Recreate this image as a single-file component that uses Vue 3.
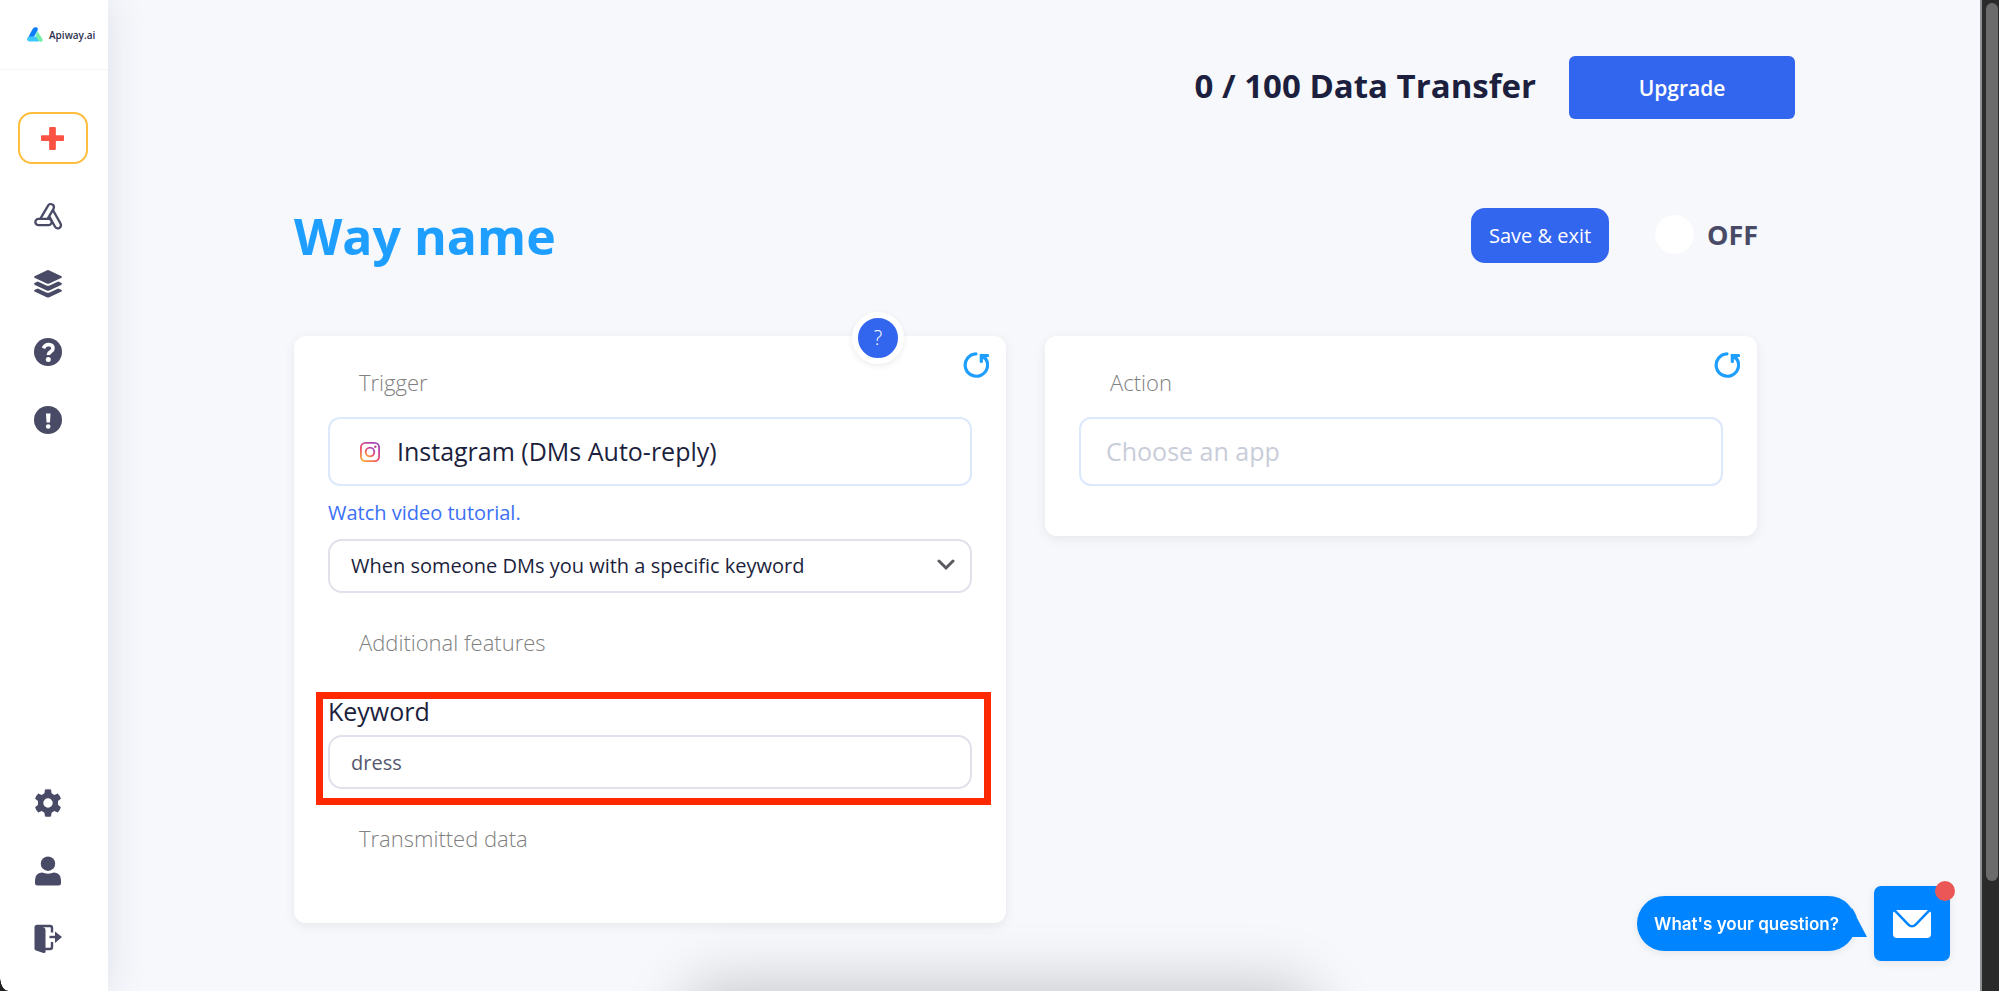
<template>
  <div class="app">
    <aside class="sidebar">
      <a class="logo" href="#" aria-label="Apiway.ai">
        <svg class="logo__mark" viewBox="0 0 32 30" aria-hidden="true">
          <path d="M1 21 C-1 25 1 29 5 29 H25 L20 19 H4 Z" fill="#3cc8fb" />
          <path d="M9 8 L12 3 Q15 -1 20 1 Q23 3 21 7 L15 18 Q14 19.500 12 19.500 H3 Z" fill="#0b7ffb" />
          <path d="M20.500 8 L31 24 Q33 29 28 30 Q24 30 21 24 L17 17 Z" fill="#76efab" />
        </svg>
        <span class="logo__text">Apiway.ai</span>
      </a>

      <button class="add" type="button" aria-label="Add way">
        <svg viewBox="0 0 24 24"><path d="M9.500 0h5q1 0 1 1v7.500H23q1 0 1 1v4q0 1-1 1h-7.500V23q0 1-1 1h-5q-1 0-1-1v-8.500H1q-1 0-1-1v-4q0-1 1-1h7.500V1q0-1 1-1z" /></svg>
      </button>

      <nav class="nav">
        <a href="#" aria-label="Ways">
          <!-- three overlapping capsules, each a thick stroke with a white core -->
          <svg viewBox="0 0 28 28" class="capsules">
            <path class="capsule" d="M17 11 L23.800 23.200" />
            <path class="core" d="M17 11 L23.800 23.200" />
            <path class="capsule" d="M9 18.500 L16.800 5.200" />
            <path class="core" d="M9 18.500 L16.800 5.200" />
            <path class="capsule" d="M4.500 20 H14.500" />
            <path class="core" d="M4.500 20 H14.500" />
          </svg>
        </a>
        <a href="#" aria-label="Templates">
          <svg viewBox="0 0 28 28">
            <path d="M12.700.4q1.300-.6 2.600 0L27 5.900q2 1 0 2L15.300 13.400q-1.300.6-2.600 0L1 7.900q-2-1 0-2z" />
            <path d="M1 12.800q-2 1 0 2.100l11.700 5.500q1.300.6 2.600 0L27 14.900q2-1.100 0-2.100l-2.800-1.300-8 3.800q-2.200 1-4.400 0l-8-3.800z" />
            <path d="M1 19.700q-2 1 0 2.100l11.700 5.500q1.300.6 2.600 0L27 21.800q2-1.100 0-2.100l-2.800-1.300-8 3.800q-2.200 1-4.400 0l-8-3.800z" />
          </svg>
        </a>
        <a href="#" aria-label="Help">
          <svg viewBox="0 0 28 28">
            <circle cx="14" cy="14" r="14" />
            <path class="cut-line" d="M9.400 10.200 Q11 6.500 14.600 6.500 Q19 6.700 19 10.200 Q19 12.300 16.800 13.600 Q14.400 15 14.300 17" />
            <circle class="cut" cx="14.300" cy="21.500" r="2.500" />
          </svg>
        </a>
        <a href="#" aria-label="News">
          <svg viewBox="0 0 28 28">
            <circle cx="14" cy="14" r="14" />
            <path class="cut" d="M12 7.500h4.500l-.5 9h-3.500z" />
            <circle class="cut" cx="14.200" cy="20.500" r="2.300" />
          </svg>
        </a>
      </nav>

      <nav class="nav nav--bottom">
        <a href="#" aria-label="Settings">
          <svg viewBox="0 0 28 28">
            <path fill-rule="evenodd" d="M11 .6q3-.9 6 0l.6 3.700 2.700 1.600 3.500-1.400q2.200 2.200 3.100 5.200L24 12.100v3.600l2.900 2.500q-1 3.100-3.100 5.300l-3.500-1.400-2.700 1.600-.6 3.700q-3 .9-6 0l-.6-3.700-2.700-1.600-3.500 1.400Q2 21.300 1.100 18.200L4 15.700v-3.600L1.100 9.700Q2 6.700 4.200 4.500l3.500 1.400 2.700-1.600zM14 9.300a4.700 4.700 0 1 0 0 9.400 4.700 4.700 0 0 0 0-9.400z" />
          </svg>
        </a>
        <a href="#" aria-label="Profile">
          <svg viewBox="0 0 28 28">
            <circle cx="14" cy="6.700" r="7.200" />
            <path d="M8 15.500q1 0 2 .5 4 1.300 8 0 1-.5 2-.5 7 .6 7 8v2.500q0 2.500-2.500 2.500h-21Q1 28.500 1 26v-2.500q0-7.400 7-8z" />
          </svg>
        </a>
        <a href="#" aria-label="Log out">
          <svg viewBox="0 0 28 28">
            <path d="M.5 2 Q.5 0 2.500 0 L10 2.500 Q11.500 3 11.500 5 V26.500 Q11.500 28.500 9.500 28 L2 25.500 Q.5 25 .5 23.500 Z" />
            <path class="door" d="M2.500 1 H16 Q18 1 18 3 V7.500 M18 17 V22 Q18 24 16 24 H11" />
            <path class="door" d="M15.500 12 H22" />
            <path d="M21 6.500 L28 12 L21 18 Z" />
          </svg>
        </a>
      </nav>
    </aside>

    <main class="main">
      <header class="topbar">
        <span class="topbar__usage">{{ used }} / {{ limit }} Data Transfer</span>
        <button class="topbar__upgrade" type="button">Upgrade</button>
      </header>

      <section class="workspace">
        <div class="heading">
          <h1>Way name</h1>
          <button class="heading__save" type="button">Save &amp; exit</button>
          <label class="switch">
            <input v-model="enabled" type="checkbox" />
            <span>{{ enabled ? 'ON' : 'OFF' }}</span>
          </label>
        </div>

        <div class="cards">
          <article class="card">
            <button class="card__help" type="button" aria-label="Help">?</button>
            <button class="card__reset" type="button" aria-label="Reset trigger">
              <svg viewBox="0 0 26 26"><path d="M13 1.800 A11.200 11.200 0 1 0 22.500 6.500" /><path d="M18.300 9.500 V3.500 H24.500 M18.300 3.500 L22 6.500" /></svg>
            </button>

            <label class="caption" for="trigger-app">Trigger</label>
            <div class="app-field">
              <svg class="app-field__icon" viewBox="0 0 20 20" aria-hidden="true">
                <defs>
                  <linearGradient id="insta" x1="0" y1="1" x2=".7" y2="0">
                    <stop offset="0" stop-color="#fdb52f" />
                    <stop offset=".5" stop-color="#f0486a" />
                    <stop offset="1" stop-color="#a448b8" />
                  </linearGradient>
                </defs>
                <g fill="none" stroke="url(#insta)" stroke-width="1.800">
                  <rect x=".9" y=".9" width="18.200" height="18.200" rx="4.500" />
                  <circle cx="10" cy="10" r="4.300" />
                </g>
                <circle cx="15.300" cy="4.700" r="1.200" fill="#c83f94" />
              </svg>
              <input id="trigger-app" v-model="triggerApp" type="text" />
            </div>
            <a class="tutorial" href="#">Watch video tutorial.</a>

            <div class="select">
              <select v-model="event" aria-label="Trigger event">
                <option v-for="item in events" :key="item">{{ item }}</option>
              </select>
              <svg viewBox="0 0 18 12" aria-hidden="true"><path d="M2 2 L9 9 L16 2" /></svg>
            </div>

            <p class="caption caption--section">Additional features</p>

            <div class="keyword">
              <label for="keyword">Keyword</label>
              <input id="keyword" v-model="keyword" type="text" />
            </div>

            <p class="caption caption--section">Transmitted data</p>
          </article>

          <article class="card card--action">
            <button class="card__reset" type="button" aria-label="Reset action">
              <svg viewBox="0 0 26 26"><path d="M13 1.800 A11.200 11.200 0 1 0 22.500 6.500" /><path d="M18.300 9.500 V3.500 H24.500 M18.300 3.500 L22 6.500" /></svg>
            </button>
            <label class="caption" for="action-app">Action</label>
            <div class="app-field">
              <input id="action-app" v-model="actionApp" type="text" placeholder="Choose an app" />
            </div>
          </article>
        </div>
      </section>
    </main>

    <div class="scrollbar"><div class="scrollbar__thumb"></div></div>
    <div class="dock-shadow"></div>
    <div class="corner"></div>

    <div class="chat">
      <div class="chat__bubble">
        What's your question?
        <svg class="chat__tail" viewBox="0 0 20 30" aria-hidden="true"><path d="M4 0 Q8 6 9 10 L19 29 H0 Z" /></svg>
      </div>
      <button class="chat__button" type="button" aria-label="Open chat">
        <svg viewBox="0 0 38 28">
          <path d="M3 0H35L22 13.500Q19 16.500 16 13.500Z" />
          <path d="M0 3Q0 2 1 1.500L14.500 15.500Q19 19.500 23.500 15.500L37 1.500Q38 2 38 3V24Q38 28 34 28H4Q0 28 0 24Z" />
        </svg>
        <span class="chat__dot"></span>
      </button>
    </div>
  </div>
</template>

<script setup>
import { ref } from 'vue'

const used = ref(0)
const limit = ref(100)
const enabled = ref(false)

const events = ['When someone DMs you with a specific keyword']

const triggerApp = ref('Instagram (DMs Auto-reply)')
const actionApp = ref('')
const event = ref(events[0])
const keyword = ref('dress')
</script>

<style>
body {
  background: #f6f8fc;
}
</style>

<style scoped>
.app,
.app * {
  box-sizing: border-box;
}
.app {
  display: flex;
  min-height: 100vh;
  background: #f6f8fc;
  color: #1c1f3d;
  font-family: "Open Sans", "Noto Sans", sans-serif;
  font-size: 20px;
  line-height: 30px;
}
button,
input,
select {
  font: inherit;
  color: inherit;
  margin: 0;
}
button {
  border: none;
  padding: 0;
  cursor: pointer;
}

/* Sidebar */
.sidebar {
  flex: 0 0 108px;
  display: flex;
  flex-direction: column;
  padding-bottom: 38px;
  background: #fff;
  box-shadow: 0 0 40px rgba(30, 40, 80, 0.12);
}
.logo {
  display: flex;
  align-items: center;
  gap: 6px;
  height: 70px;
  padding-left: 27px;
  border-bottom: 1px solid #f6f6f8;
  text-decoration: none;
}
.logo__mark { width: 16px; height: 15px; }
.logo__text {
  color: #2b3050;
  font-size: 10px;
  font-weight: 600;
}
.add {
  display: flex;
  align-items: center;
  justify-content: center;
  width: 70px;
  height: 52px;
  margin: 42px 0 38px 18px;
  padding-right: 2px;
  border: 2px solid #ffbe3d;
  border-radius: 14px;
  background: #fff;
}
.add svg { width: 23px; height: 23px; fill: #fb5343; }
.nav {
  display: flex;
  flex-direction: column;
  gap: 40px;
  padding-left: 34px;
}
.nav--bottom { margin-top: auto; }
.nav a { height: 28px; }
.nav svg {
  display: block;
  width: 28px;
  height: 28px;
  fill: #494b66;
  overflow: visible;
}
.capsules { stroke-linecap: round; }
.capsules .capsule { stroke: #494b66; stroke-width: 8.6; }
.capsules .core { stroke: #fff; stroke-width: 4; }
.nav .cut { fill: #fff; }
.nav .cut-line { fill: none; stroke: #fff; stroke-width: 3.6; }
.nav .door { fill: none; stroke: #494b66; stroke-width: 2.4; }

/* Page */
.main {
  flex: 1;
  min-width: 0;
  padding: 56px 185px 68px 186px;
}
.topbar {
  display: flex;
  align-items: center;
  justify-content: flex-end;
  gap: 33px;
}
.topbar__usage {
  padding-bottom: 4px;
  font-size: 33px;
  font-weight: 700;
}
.topbar__upgrade {
  width: 226px;
  height: 63px;
  border-radius: 6px;
  background: #3366ee;
  color: #fff;
  font-size: 21px;
  font-weight: 600;
}
.workspace {
  padding-right: 38px;
}
.heading {
  display: flex;
  align-items: center;
  height: 55px;
  margin: 89px 0 73px;
}
.heading h1 {
  flex: 1;
  margin: 0;
  color: #1e9fff;
  font-size: 50px;
  font-weight: 700;
}
.heading__save {
  width: 138px;
  height: 55px;
  margin-right: 46px;
  border-radius: 14px;
  background: #3366ee;
  color: #fff;
}
.switch {
  display: flex;
  align-items: center;
  gap: 13px;
  width: 102px;
  padding-bottom: 2px;
  color: #494b66;
  font-size: 27px;
  font-weight: 700;
}
.switch input {
  flex: none;
  appearance: none;
  width: 39px;
  height: 39px;
  border-radius: 50%;
  background: #fff;
}
.switch input:checked { background: #1e9fff; }

/* Cards */
.cards {
  display: grid;
  grid-template-columns: 1fr 1fr;
  gap: 39px;
  align-items: start;
}
.card {
  position: relative;
  padding: 32px 34px 71px;
  border-radius: 12px;
  background: #fff;
  box-shadow: 0 3px 12px rgba(0, 0, 0, 0.07);
}
.card--action { padding-bottom: 50px; }
.card__help {
  position: absolute;
  top: -24px;
  right: 102px;
  width: 52px;
  height: 52px;
  border: 6px solid #fff;
  border-radius: 50%;
  background: #3366ee;
  box-shadow: 0 2px 6px rgba(0, 0, 0, 0.08);
  color: #fff;
  font-weight: 300;
}
.card__reset {
  position: absolute;
  top: 16px;
  right: 17px;
  width: 26px;
  height: 26px;
  background: none;
}
.card__reset svg { display: block; fill: none; stroke: #1e9fff; stroke-width: 3.2; stroke-linecap: round; }
.caption {
  display: block;
  margin: 0 0 21px;
  padding-left: 31px;
  color: #808080;
  font-size: 22px;
  font-weight: 300;
  line-height: 28px;
}
.caption--section { margin: 35px 0 0; }
.app-field {
  display: flex;
  align-items: center;
  gap: 17px;
  height: 69px;
  padding: 0 25px;
  border: 2px solid #dce8fb;
  border-radius: 12px;
}
.app-field__icon { flex: none; width: 20px; height: 20px; margin-left: 5px; }
.app-field input {
  flex: 1;
  min-width: 0;
  height: 40px;
  padding: 0 0 2px;
  border: none;
  outline: none;
  background: none;
  font-size: 25px;
  line-height: 38px;
}
.app-field input::placeholder { color: #c8cdd9; opacity: 1; }
.tutorial {
  display: block;
  margin: 12px 0 11px;
  color: #3b70f5;
  text-decoration: none;
}
.select { position: relative; }
.select select,
.keyword input {
  display: block;
  width: 100%;
  height: 54px;
  padding: 0 21px;
  border: 2px solid #e0e1ea;
  border-radius: 14px;
  outline: none;
  background: #fff;
}
.select select { appearance: none; }
.select svg {
  position: absolute;
  top: 20px;
  right: 17px;
  width: 18px;
  height: 12px;
  fill: none;
  stroke: #5a5a60;
  stroke-width: 3;
  stroke-linecap: round;
  pointer-events: none;
}
.keyword {
  position: relative;
  margin-top: 40px;
}
.keyword label {
  display: block;
  margin-bottom: 9px;
  font-size: 25px;
}
.keyword input { color: #55576f; }
/* highlight frame around the keyword field */
.keyword::after {
  content: "";
  position: absolute;
  inset: -4px -19px -16px -12px;
  border: 7px solid #ff2800;
  pointer-events: none;
}

/* Window edge */
.scrollbar {
  flex: 0 0 19px;
  padding: 3px 1px 0 4px;
  border-left: 2px solid #8e9294;
  background: #2a2a2a;
}
.scrollbar__thumb {
  height: 878px;
  max-height: 89vh;
  border-radius: 6px;
  background: #6b6b6b;
}
.dock-shadow {
  position: fixed;
  bottom: -60px;
  left: 35%;
  width: 30%;
  height: 50px;
  border-radius: 20px;
  box-shadow: 0 0 60px 20px rgba(0, 0, 0, 0.18);
}
.corner {
  position: fixed;
  left: 0;
  bottom: 0;
  width: 8px;
  height: 14px;
  background: radial-gradient(ellipse 8px 14px at 100% 0, transparent 94%, #222 100%);
}

/* Chat widget */
.chat {
  position: fixed;
  right: 49px;
  bottom: 30px;
  display: flex;
  align-items: center;
  gap: 18px;
}
.chat__bubble {
  position: relative;
  padding: 13px 17px 12px;
  border-radius: 28px;
  background: #0084ff;
  box-shadow: 0 2px 8px rgba(0, 0, 0, 0.08);
  color: #fff;
  font-family: Inter, sans-serif;
  font-size: 17px;
  font-weight: 600;
}
.chat__tail {
  position: absolute;
  right: -12px;
  bottom: 13px;
  width: 20px;
  height: 30px;
  fill: #0084ff;
}
.chat__button {
  position: relative;
  width: 76px;
  height: 75px;
  border-radius: 7px;
  background: #0084ff;
  box-shadow: 0 2px 8px rgba(0, 0, 0, 0.08);
}
.chat__button svg { display: block; width: 38px; height: 28px; margin: 0 auto; fill: #fff; }
.chat__dot {
  position: absolute;
  top: -5px;
  right: -5px;
  width: 20px;
  height: 20px;
  border-radius: 50%;
  background: #eb5757;
}
</style>
